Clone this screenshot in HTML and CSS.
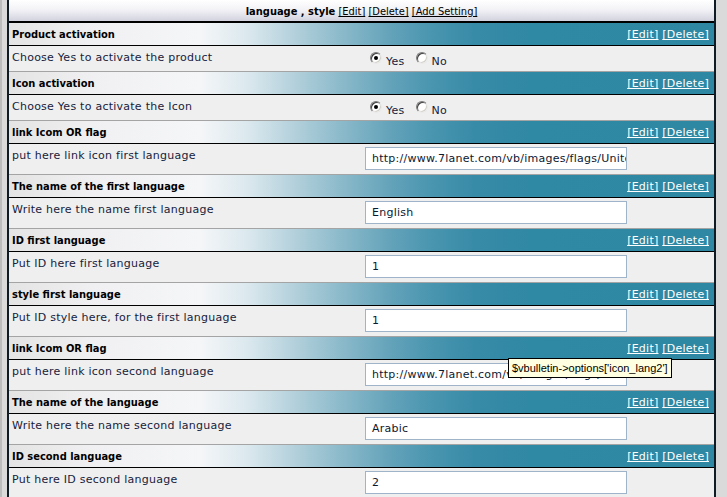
FILE: index.html
```html
<!DOCTYPE html>
<html>
<head>
<meta charset="utf-8">
<title>language , style</title>
<link rel="stylesheet" href="styles.css">
</head>
<body>
<div class="frame">
  <div class="topbar"><b>language , style</b> <a href="#">[Edit]</a> <a href="#">[Delete]</a> <a href="#">[Add Setting]</a></div>

  <div class="shead"><span class="title">Product activation</span><span class="links"><a href="#">[Edit]</a> <a href="#">[Delete]</a></span></div>
  <div class="srow short">
    <div class="label">Choose Yes to activate the product</div>
    <div class="value radios">
      <span class="radio checked"></span><span class="rtext">Yes</span>
      <span class="radio"></span><span class="rtext">No</span>
    </div>
  </div>

  <div class="shead"><span class="title">Icon activation</span><span class="links"><a href="#">[Edit]</a> <a href="#">[Delete]</a></span></div>
  <div class="srow short">
    <div class="label">Choose Yes to activate the Icon</div>
    <div class="value radios">
      <span class="radio checked"></span><span class="rtext">Yes</span>
      <span class="radio"></span><span class="rtext">No</span>
    </div>
  </div>

  <div class="shead"><span class="title">link Icom OR flag</span><span class="links"><a href="#">[Edit]</a> <a href="#">[Delete]</a></span></div>
  <div class="srow">
    <div class="label">put here link icon first language</div>
    <div class="value"><div class="field">http://www.7lanet.com/vb/images/flags/United-Kingdom.gif</div></div>
  </div>

  <div class="shead"><span class="title">The name of the first language</span><span class="links"><a href="#">[Edit]</a> <a href="#">[Delete]</a></span></div>
  <div class="srow">
    <div class="label">Write here the name first language</div>
    <div class="value"><div class="field">English</div></div>
  </div>

  <div class="shead"><span class="title">ID first language</span><span class="links"><a href="#">[Edit]</a> <a href="#">[Delete]</a></span></div>
  <div class="srow">
    <div class="label">Put ID here first language</div>
    <div class="value"><div class="field">1</div></div>
  </div>

  <div class="shead"><span class="title">style first language</span><span class="links"><a href="#">[Edit]</a> <a href="#">[Delete]</a></span></div>
  <div class="srow">
    <div class="label">Put ID style here, for the first language</div>
    <div class="value"><div class="field">1</div></div>
  </div>

  <div class="shead"><span class="title">link Icom OR flag</span><span class="links"><a href="#">[Edit]</a> <a href="#">[Delete]</a></span></div>
  <div class="srow">
    <div class="label">put here link icon second language</div>
    <div class="value"><div class="field">http://www.7lanet.com/vb/images/flags/Palestine.gif</div></div>
  </div>

  <div class="shead"><span class="title">The name of the language</span><span class="links"><a href="#">[Edit]</a> <a href="#">[Delete]</a></span></div>
  <div class="srow">
    <div class="label">Write here the name second language</div>
    <div class="value"><div class="field">Arabic</div></div>
  </div>

  <div class="shead"><span class="title">ID second language</span><span class="links"><a href="#">[Edit]</a> <a href="#">[Delete]</a></span></div>
  <div class="srow">
    <div class="label">Put here ID second language</div>
    <div class="value"><div class="field">2</div></div>
  </div>
</div>
<div class="tooltip">$vbulletin-&gt;options['icon_lang2']</div>
</body>
</html>
```
FILE: styles.css
```css
html {
  background: #d4d4d4;
}
body {
  margin: 0;
  padding-left: 5px;
  border-left: 2px solid #bcbcbc;
  min-height: 497px;
  box-sizing: border-box;
  background: #dadada;
  font-family: "DejaVu Sans", Verdana, sans-serif;
  font-size: 11px;
  letter-spacing: 0.25px;
  overflow: hidden;
  position: relative;
}
.frame {
  width: 705px;
  border-left: 2px solid #0e1a24;
  border-right: 2px solid #0e1a24;
  background: #efefef;
}
.topbar {
  height: 20px;
  padding-top: 1px;
  line-height: 21px;
  text-align: center;
  background: linear-gradient(to bottom, #ffffff 0%, #f3f3f7 45%, #d2d2de 100%);
  border-bottom: 2px solid #000;
  color: #000;
  font-family: "DejaVu Sans Condensed", "DejaVu Sans", sans-serif;
  letter-spacing: 0;
}
.topbar b,
.title {
  font-family: "DejaVu Sans Condensed", "DejaVu Sans", sans-serif;
  font-weight: bold;
  letter-spacing: 0;
}
.topbar a {
  color: #000;
  text-decoration: underline;
}
.shead {
  height: 21px;
  padding: 1px 5px 0 3px;
  display: flex;
  align-items: center;
  justify-content: space-between;
  border-bottom: 1px solid #000;
  background: linear-gradient(to right, #e4e4e4 0%, #f0f0f2 12%, #f5f6f8 27%, #dae8ee 34%, #b6d2dd 40%, #8cbacb 47%, #64a3ba 54%, #4995af 60%, #388ba7 66%, #2f88a4 74%, #2e87a3 100%);
}
.title {
  color: #000;
}
.links a {
  color: #fff;
  text-decoration: underline;
}
.srow {
  display: flex;
  height: 30px;
  border-bottom: 1px solid #a4a4a4;
  color: #16223c;
}
.srow.short {
  height: 25px;
}
.label {
  width: 353px;
  padding: 5px 3px 0;
  box-sizing: border-box;
}
.value {
  flex: 1;
  padding: 3px 0 0 3px;
}
.field {
  width: 262px;
  height: 23px;
  box-sizing: border-box;
  border: 1px solid #9fb4c8;
  background: #fff;
  padding: 0 6px;
  line-height: 22px;
  white-space: nowrap;
  overflow: hidden;
  color: #0c1830;
}
.radios {
  display: flex;
  align-items: flex-end;
  padding: 0 0 0 8px;
  height: 22px;
}
.radio {
  width: 12px;
  height: 12px;
  box-sizing: border-box;
  border-radius: 50%;
  border: 1px solid;
  border-color: #7a7a7a #e8e8e8 #e8e8e8 #7a7a7a;
  box-shadow: inset 1px 1px 0 #404040, inset -1px -1px 0 #d4d0c8;
  background: #fff;
  margin-bottom: 4px;
  position: relative;
}
.radio.checked::after {
  content: "";
  position: absolute;
  left: 3px;
  top: 3px;
  width: 4px;
  height: 4px;
  border-radius: 50%;
  background: #000;
}
.rtext {
  margin-left: 4px;
  margin-right: 11px;
  line-height: 13px;
}
.tooltip {
  position: absolute;
  left: 506px;
  top: 358px;
  height: 20px;
  box-sizing: border-box;
  padding: 0 3px;
  border: 1px solid #000;
  background: #ffffe1;
  color: #000;
  font-family: "Liberation Sans", Arial, sans-serif;
  font-size: 11px;
  letter-spacing: 0;
  line-height: 18px;
  white-space: nowrap;
}
```
